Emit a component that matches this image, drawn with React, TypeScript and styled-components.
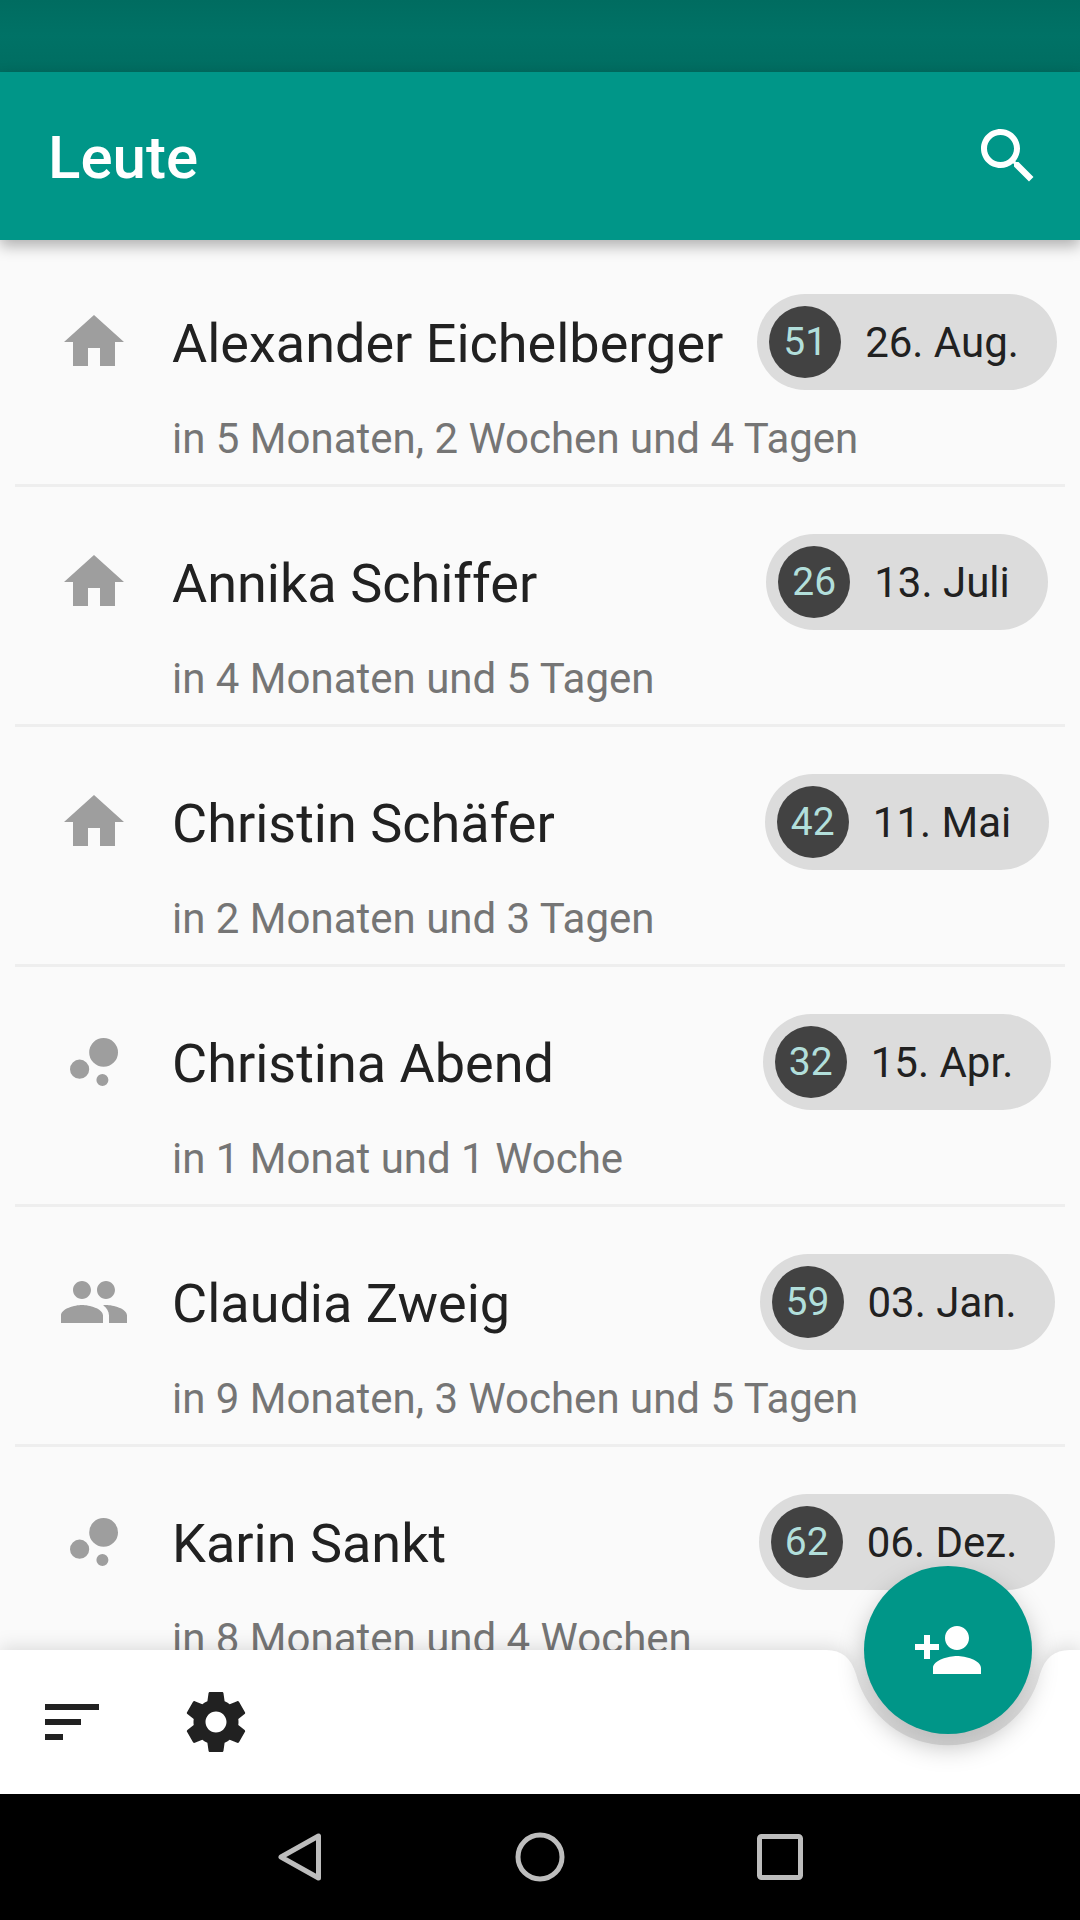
import React from 'react';
import styled, { createGlobalStyle } from 'styled-components';

const ICONS = {
  home: 'M10 20v-6h4v6h5v-8h3L12 3 2 12h3v8z',
  bubbles:
    'M4 14.4a3.2 3.2 0 1 1 6.4 0a3.2 3.2 0 1 1-6.4 0zM12.8 18a2 2 0 1 1 4 0a2 2 0 1 1-4 0zM10.4 8.8a4.8 4.8 0 1 1 9.6 0a4.8 4.8 0 1 1-9.6 0z',
  group:
    'M16 11c1.66 0 2.99-1.34 2.99-3S17.66 5 16 5c-1.66 0-3 1.34-3 3s1.34 3 3 3zm-8 0c1.66 0 2.99-1.34 2.99-3S9.66 5 8 5C6.34 5 5 6.34 5 8s1.34 3 3 3zm0 2c-2.33 0-7 1.17-7 3.5V19h14v-2.5c0-2.33-4.67-3.5-7-3.5zm8 0c-.29 0-.62.02-.97.05 1.16.84 1.97 1.97 1.97 3.45V19h6v-2.5c0-2.33-4.67-3.5-7-3.5z',
  search:
    'M15.5 14h-.79l-.28-.27C15.41 12.59 16 11.11 16 9.5 16 5.91 13.09 3 9.5 3S3 5.91 3 9.5 5.91 16 9.5 16c1.61 0 3.09-.59 4.23-1.57l.27.28v.79l5 4.99L20.49 19l-4.99-5zm-6 0C7.01 14 5 11.99 5 9.5S7.01 5 9.5 5 14 7.01 14 9.5 11.99 14 9.5 14z',
  sort: 'M3 18h6v-2H3v2zM3 6v2h18V6H3zm0 7h12v-2H3v2z',
  settings:
    'M19.43 12.98c.04-.32.07-.64.07-.98s-.03-.66-.07-.98l2.11-1.65c.19-.15.24-.42.12-.64l-2-3.46c-.12-.22-.39-.3-.61-.22l-2.49 1c-.52-.4-1.08-.73-1.69-.98l-.38-2.65C14.46 2.18 14.25 2 14 2h-4c-.25 0-.46.18-.49.42l-.38 2.65c-.61.25-1.17.59-1.69.98l-2.49-1c-.23-.09-.49 0-.61.22l-2 3.46c-.13.22-.07.49.12.64l2.11 1.65c-.04.32-.07.65-.07.98s.03.66.07.98l-2.11 1.65c-.19.15-.24.42-.12.64l2 3.46c.12.22.39.3.61.22l2.49-1c.52.4 1.08.73 1.69.98l.38 2.65c.03.24.24.42.49.42h4c.25 0 .46-.18.49-.42l.38-2.65c.61-.25 1.17-.59 1.69-.98l2.49 1c.23.09.49 0 .61-.22l2-3.46c.12-.22.07-.49-.12-.64l-2.11-1.65zM12 15.5c-1.93 0-3.5-1.57-3.5-3.5s1.57-3.5 3.5-3.5 3.5 1.57 3.5 3.5-1.57 3.5-3.5 3.5z',
  personAdd:
    'M15 12c2.21 0 4-1.79 4-4s-1.79-4-4-4-4 1.79-4 4 1.79 4 4 4zm-9-2V7H4v3H1v2h3v3h2v-3h3v-2H6zm9 4c-2.67 0-8 1.34-8 4v2h16v-2c0-2.66-5.33-4-8-4z',
};

type IconName = keyof typeof ICONS;

const PEOPLE: { icon: IconName; name: string; age: number; date: string; until: string }[] = [
  { icon: 'home', name: 'Alexander Eichelberger', age: 51, date: '26. Aug.', until: 'in 5 Monaten, 2 Wochen und 4 Tagen' },
  { icon: 'home', name: 'Annika Schiffer', age: 26, date: '13. Juli', until: 'in 4 Monaten und 5 Tagen' },
  { icon: 'home', name: 'Christin Schäfer', age: 42, date: '11. Mai', until: 'in 2 Monaten und 3 Tagen' },
  { icon: 'bubbles', name: 'Christina Abend', age: 32, date: '15. Apr.', until: 'in 1 Monat und 1 Woche' },
  { icon: 'group', name: 'Claudia Zweig', age: 59, date: '03. Jan.', until: 'in 9 Monaten, 3 Wochen und 5 Tagen' },
  { icon: 'bubbles', name: 'Karin Sankt', age: 62, date: '06. Dez.', until: 'in 8 Monaten und 4 Wochen' },
];

function Icon({ name, color }: { name: IconName; color: string }) {
  return (
    <svg width="72" height="72" viewBox="0 0 24 24" fill={color}>
      <path d={ICONS[name]} />
    </svg>
  );
}

export default function App() {
  return (
    <Screen>
      <GlobalStyle />
      <StatusBar />
      <AppBar>
        <Title>Leute</Title>
        <IconButton>
          <Icon name="search" color="#ffffff" />
        </IconButton>
      </AppBar>
      <Main>
        <List>
          {PEOPLE.map((person) => (
            <Row key={person.name}>
              <RowIcon>
                <Icon name={person.icon} color="#9e9e9e" />
              </RowIcon>
              <RowBody>
                <RowTop>
                  <Name>{person.name}</Name>
                  <Trailing>
                    <Pill>
                      <Age>{person.age}</Age>
                      <DateLabel>{person.date}</DateLabel>
                    </Pill>
                  </Trailing>
                </RowTop>
                <Until>{person.until}</Until>
              </RowBody>
            </Row>
          ))}
        </List>
        <BottomShadow>
          <BottomBar>
            <IconButton>
              <Icon name="sort" color="#212121" />
            </IconButton>
            <IconButton>
              <Icon name="settings" color="#212121" />
            </IconButton>
          </BottomBar>
        </BottomShadow>
        <Fab>
          <Icon name="personAdd" color="#ffffff" />
        </Fab>
      </Main>
      <NavBar>
        <svg width="60" height="60" viewBox="0 0 60 60" fill="none" stroke="#bdbdbd" strokeWidth="5" strokeLinejoin="round">
          <path d="M11 30 L48.500 9 V51 Z" />
        </svg>
        <svg width="60" height="60" viewBox="0 0 60 60" fill="none" stroke="#bdbdbd" strokeWidth="5">
          <circle cx="30" cy="30" r="22" />
        </svg>
        <svg width="60" height="60" viewBox="0 0 60 60" fill="none" stroke="#bdbdbd" strokeWidth="5" strokeLinejoin="round">
          <rect x="9.500" y="9.500" width="41" height="41" rx="2" />
        </svg>
      </NavBar>
    </Screen>
  );
}

const GlobalStyle = createGlobalStyle`
  html, body {
    margin: 0;
    padding: 0;
    background: #fafafa;
  }

  * {
    box-sizing: border-box;
  }
`;

const Screen = styled.div`
  display: flex;
  flex-direction: column;
  width: 1080px;
  height: 1920px;
  overflow: hidden;
  background: #fafafa;
  font-family: Roboto, 'Noto Sans', sans-serif;
`;

const StatusBar = styled.div`
  flex: 0 0 72px;
  background: linear-gradient(#006c60, #007266 50%, #006d61);
`;

const AppBar = styled.header`
  position: relative;
  z-index: 2;
  flex: 0 0 168px;
  display: flex;
  align-items: center;
  justify-content: space-between;
  padding-left: 48px;
  background: #009688;
  box-shadow: 0 6px 14px rgba(0, 0, 0, 0.3);
`;

const Title = styled.h1`
  margin: 2px 0 0;
  color: #ffffff;
  font-size: 60px;
  font-weight: 500;
`;

const IconButton = styled.div`
  flex: 0 0 144px;
  display: flex;
  align-items: center;
  justify-content: center;
  height: 144px;

  svg {
    display: block;
  }
`;

const Main = styled.main`
  position: relative;
  flex: 1;
  overflow: hidden;
`;

const List = styled.div`
  padding: 7px 15px 0;
`;

const Row = styled.div`
  display: flex;
  height: 240px;
  padding: 47px 8px 0 43px;
  border-bottom: 3px solid #eeeeee;

  &:last-child {
    border-bottom: 0;
  }
`;

const RowIcon = styled.div`
  flex: 0 0 72px;
  height: 96px;
  margin-right: 42px;
  display: flex;
  align-items: center;

  svg {
    display: block;
  }
`;

const RowBody = styled.div`
  flex: 1;
  min-width: 0;
`;

const RowTop = styled.div`
  display: flex;
  align-items: center;
  justify-content: space-between;
  height: 96px;
`;

const Name = styled.div`
  padding-top: 2px;
  color: #212121;
  font-size: 54px;
  white-space: nowrap;
`;

const Trailing = styled.div`
  flex: 0 0 300px;
  display: flex;
  justify-content: center;
`;

const Pill = styled.div`
  display: flex;
  align-items: center;
  height: 96px;
  padding: 0 38px 0 12px;
  border-radius: 48px;
  background: #dcdcdc;
`;

const Age = styled.div`
  width: 72px;
  height: 72px;
  border-radius: 50%;
  display: flex;
  align-items: center;
  justify-content: center;
  background: #424242;
  color: #b2dfdb;
  font-size: 39px;
`;

const DateLabel = styled.div`
  margin-left: 24px;
  color: #212121;
  font-size: 42px;
  white-space: nowrap;
`;

const Until = styled.div`
  margin-top: 24px;
  color: #757575;
  font-size: 42px;
  line-height: 50px;
  white-space: nowrap;
`;

const BottomShadow = styled.div`
  position: absolute;
  left: 0;
  right: 0;
  bottom: 0;
  filter: drop-shadow(0 -3px 9px rgba(0, 0, 0, 0.12));
`;

const BottomBar = styled.nav`
  display: flex;
  height: 144px;
  background: #ffffff;
  clip-path: path('M0 0 H826 C842 0 851 8 856 24 A95 95 0 0 0 1040 24 C1045 8 1054 0 1070 0 H1080 V144 H0 Z');
`;

const Fab = styled.button`
  position: absolute;
  left: 864px;
  bottom: 60px;
  width: 168px;
  height: 168px;
  padding: 0;
  border: 0;
  border-radius: 50%;
  display: flex;
  align-items: center;
  justify-content: center;
  background: #009688;
  box-shadow: 0 12px 26px rgba(0, 0, 0, 0.26);
`;

const NavBar = styled.div`
  flex: 0 0 126px;
  display: flex;
  align-items: center;
  justify-content: center;
  gap: 180px;
  background: #000000;

  svg {
    display: block;
  }
`;
